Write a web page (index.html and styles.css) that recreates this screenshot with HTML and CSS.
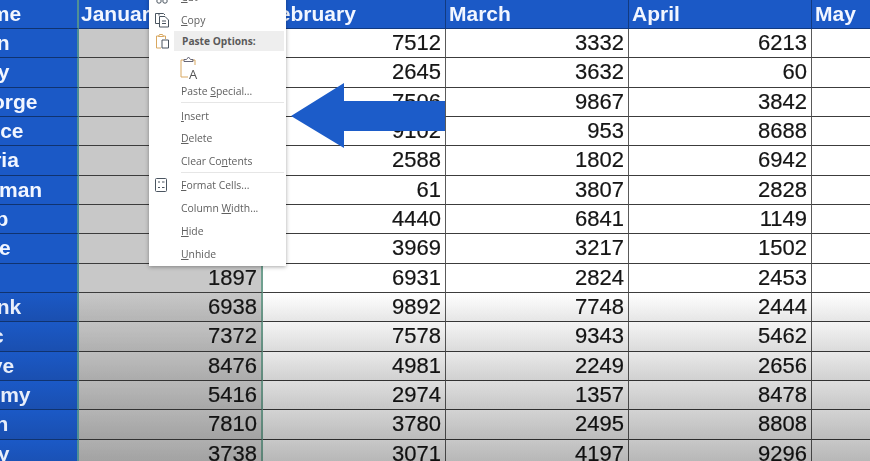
FILE: index.html
```html
<!DOCTYPE html>
<html lang="en">
<head>
<meta charset="utf-8">
<title>Excel column menu</title>
<link rel="stylesheet" href="styles.css">
</head>
<body>
<main class="stage">
  <div class="sheet">
    <div class="name head">Name</div><div class="head jan-head">January</div><div class="head">February</div><div class="head">March</div><div class="head">April</div><div class="head last">May</div>
    <div class="name">Alan</div><div class="jan"></div><div class="num">7512</div><div class="num">3332</div><div class="num">6213</div><div class="num last"></div>
    <div class="name">Amy</div><div class="jan"></div><div class="num">2645</div><div class="num">3632</div><div class="num">60</div><div class="num last"></div>
    <div class="name">George</div><div class="jan"></div><div class="num">7506</div><div class="num">9867</div><div class="num">3842</div><div class="num last"></div>
    <div class="name">Bruce</div><div class="jan"></div><div class="num">9102</div><div class="num">953</div><div class="num">8688</div><div class="num last"></div>
    <div class="name">Maria</div><div class="jan"></div><div class="num">2588</div><div class="num">1802</div><div class="num">6942</div><div class="num last"></div>
    <div class="name">Herman</div><div class="jan"></div><div class="num">61</div><div class="num">3807</div><div class="num">2828</div><div class="num last"></div>
    <div class="name">Skip</div><div class="jan"></div><div class="num">4440</div><div class="num">6841</div><div class="num">1149</div><div class="num last"></div>
    <div class="name">Mike</div><div class="jan"></div><div class="num">3969</div><div class="num">3217</div><div class="num">1502</div><div class="num last"></div>
    <div class="name">Ed</div><div class="jan num">1897</div><div class="num">6931</div><div class="num">2824</div><div class="num">2453</div><div class="num last"></div>
    <div class="name lower">Frank</div><div class="jan num">6938</div><div class="num">9892</div><div class="num">7748</div><div class="num">2444</div><div class="num last"></div>
    <div class="name lower">Eric</div><div class="jan num">7372</div><div class="num">7578</div><div class="num">9343</div><div class="num">5462</div><div class="num last"></div>
    <div class="name lower">Dave</div><div class="jan num">8476</div><div class="num">4981</div><div class="num">2249</div><div class="num">2656</div><div class="num last"></div>
    <div class="name lower">Jimmy</div><div class="jan num">5416</div><div class="num">2974</div><div class="num">1357</div><div class="num">8478</div><div class="num last"></div>
    <div class="name lower">Sian</div><div class="jan num">7810</div><div class="num">3780</div><div class="num">2495</div><div class="num">8808</div><div class="num last"></div>
    <div class="name lower">Amy</div><div class="jan num">3738</div><div class="num">3071</div><div class="num">4197</div><div class="num">9296</div><div class="num last"></div>
  </div>

  <div class="shade shade-jan" aria-hidden="true"></div>
  <div class="shade shade-rest" aria-hidden="true"></div>

  <nav class="menu">
    <div class="item">
      <span class="gutter"><svg class="icon" viewBox="0 0 16 16"><circle cx="5" cy="12" r="2.2"/><circle cx="11" cy="12" r="2.2"/><path d="M6 10 11 2M10 10 5 2"/></svg></span>
      <span class="label"><u>C</u>ut</span>
    </div>
    <div class="item">
      <span class="gutter"><svg class="icon" viewBox="0 0 16 16"><path d="M5 3.5V1.5H9.5L11 3M5 11.5H1.5V1.5H5"/><path d="M5.5 4.5H11L14.5 8V15H5.5Z"/><path d="M8 9H12M8 11.5H12"/></svg></span>
      <span class="label"><u>C</u>opy</span>
    </div>
    <div class="item item-head">
      <span class="gutter"><svg class="icon" viewBox="0 0 16 16"><path class="amber" d="M5 3H2.5V15H7"/><path class="amber" d="M9 3H11.5V6"/><path class="amber" d="M4.5 3.5 5.5 1.5H8.5L9.5 3.5Z"/><path d="M8 7H14.5V15H8Z"/></svg></span>
      <span class="label head-label">Paste Options:</span>
    </div>
    <div class="item item-paste">
      <span class="gutter"></span>
      <span class="label"><svg class="paste-icon" viewBox="0 0 20 24"><path class="amber" d="M4 4H1V21H8"/><path class="amber" d="M12 4H15V9"/><path d="M4 5.5V3.5H6.5L8.5 1 10.5 3.5H13V5.5Z"/><text x="9" y="23" class="paste-a">A</text></svg></span>
    </div>
    <div class="item item-special">
      <span class="gutter"></span>
      <span class="label">Paste <u>S</u>pecial...</span>
    </div>
    <div class="rule"></div>
    <div class="item item-insert"><span class="gutter"></span><span class="label"><u>I</u>nsert</span></div>
    <div class="item"><span class="gutter"></span><span class="label"><u>D</u>elete</span></div>
    <div class="item"><span class="gutter"></span><span class="label">Clear Co<u>n</u>tents</span></div>
    <div class="rule"></div>
    <div class="item">
      <span class="gutter"><svg class="icon icon-format" viewBox="0 0 16 16"><rect x="2.5" y="1.5" width="11" height="13" rx="1"/><path d="M5 5H7M5 10.5H7M9 5H11.5M9 10.5H11.5"/></svg></span>
      <span class="label"><u>F</u>ormat Cells...</span>
    </div>
    <div class="item"><span class="gutter"></span><span class="label">Column <u>W</u>idth...</span></div>
    <div class="item"><span class="gutter"></span><span class="label"><u>H</u>ide</span></div>
    <div class="item"><span class="gutter"></span><span class="label"><u>U</u>nhide</span></div>
  </nav>

  <svg class="arrow" viewBox="0 0 156 66" aria-hidden="true"><path d="M1 33 54 0V18H155V48H54V65Z"/></svg>
</main>
</body>
</html>
```
FILE: styles.css
```css
* { box-sizing: border-box; }
html, body { margin: 0; height: 100%; overflow: hidden; background: #fff; }
.stage { position: relative; width: 870px; height: 461px; overflow: hidden; font-family: "Liberation Sans", Arial, sans-serif; color: #111; }

.sheet {
  display: grid;
  grid-template-columns: 79px 184px 183px 183px 183px 58px;
  grid-template-rows: 29px repeat(15, 29.33px);
}
.sheet > div { border-bottom: 1.5px solid #3c3c3c; border-right: 1.5px solid #5a5a5a; min-width: 0; }

.head, .name {
  background: #1b59c6;
  color: #f2f6ff;
  font-weight: 700;
  font-size: 21px;
  white-space: nowrap;
  overflow: hidden;
  padding: 0 3px;
  line-height: 27px;
}
.sheet > .head { border-bottom-color: #123a80; border-right-color: #123a80; }
.sheet > .jan-head { border-right-color: #1b59c6; padding-left: 2px; }
.sheet > .name {
  border-bottom-color: #10336f;
  border-right: 2px solid #4f8f95;
  padding: 0;
  text-indent: -36px;
  line-height: 28px;
}
.sheet > .lower { background: linear-gradient(#1b59c6, #1a4fb0); color: #e8eefa; }
.num { font-size: 22px; line-height: 28px; text-align: right; padding-right: 4px; color: #151515; background: #fff; -webkit-text-stroke: .2px #151515; }
.sheet > .jan { background: #c8c8c8; border-right: 2px solid #6f9f8f; }
.sheet > .last { border-right: 0; }

.shade {
  position: absolute;
  top: 293px; bottom: 0;
  mix-blend-mode: multiply;
  background-blend-mode: multiply;
}
.shade-jan {
  left: 79px; width: 184px;
  background:
    repeating-linear-gradient(#fff 0, #ebebeb 29.33px),
    linear-gradient(#fff, #dcdcdc);
}
.shade-rest {
  left: 263px; right: 0;
  background:
    repeating-linear-gradient(#fff 0, #efefef 29.33px),
    linear-gradient(#fff, #c0c0c0);
}

.menu {
  position: absolute;
  left: 149px; top: -15px;
  width: 137px;
  padding-bottom: 1px;
  background: #fff;
  box-shadow: 0 1px 4px rgba(0,0,0,.35);
  font-family: "Open Sans", "Noto Sans", sans-serif;
  font-size: 10.4px;
  color: #606060;
}
.item { display: flex; align-items: center; height: 23px; }
.gutter { flex: 0 0 25px; display: flex; justify-content: center; align-items: center; height: 100%; }
.label { padding-left: 7px; white-space: nowrap; }
.item-head { height: 20px; }
.item-head .label { flex: 1; align-self: stretch; background: #eeeeee; padding-left: 8px; line-height: 20px; font-size: 10.2px; font-weight: 700; color: #5a5a5a; margin-right: 2px; }
.item-paste { height: 29px; align-items: flex-end; }
.item-paste .label { padding-left: 6px; line-height: 0; }
.item-special { height: 22px; }
.item-insert { padding-top: 2px; }
.rule { height: 1px; margin-left: 32px; margin-right: 2px; background: #e6e6e6; }

.icon { width: 16px; height: 16px; fill: none; stroke: #4a5560; stroke-width: 1; }
.icon-format { margin-left: -2px; }
.paste-icon { width: 20px; height: 24px; fill: none; stroke: #667; stroke-width: 1; }
.amber { stroke: #d9a860; }
.paste-a { fill: #555; stroke: none; font-family: "Open Sans", sans-serif; font-size: 13px; }

.arrow {
  position: absolute;
  left: 290px; top: 83px;
  width: 156px; height: 66px;
  fill: #1c5cc9;
}
```
